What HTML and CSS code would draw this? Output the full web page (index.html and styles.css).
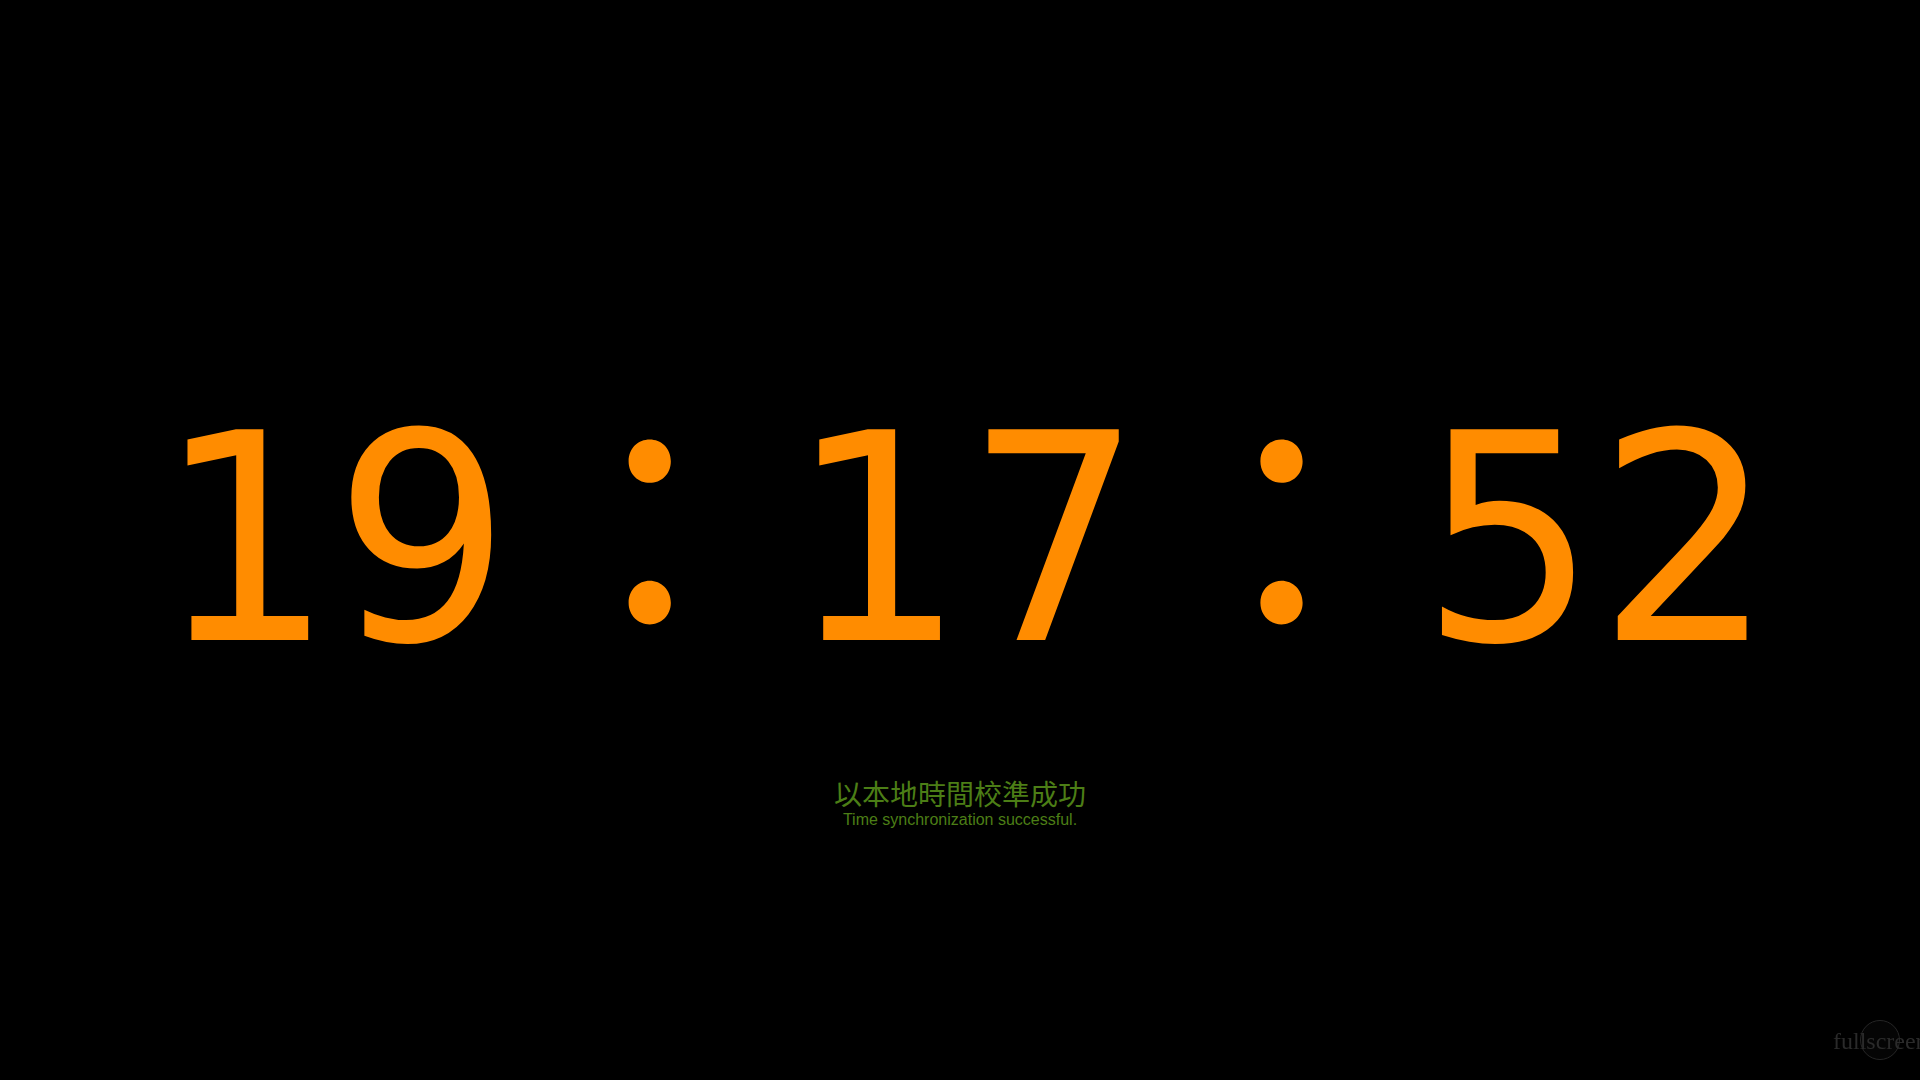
FILE: index.html
```html
<!DOCTYPE html>
<html lang="zh-Hant">
<head>
<meta charset="utf-8">
<title>時鐘</title>
<link rel="stylesheet" href="styles.css">
</head>
<body>
<main class="stage">
  <div class="clock">19：17：52</div>
  <div class="msg">
    <div class="msg-zh">以本地時間校準成功</div>
    <div class="msg-en">Time synchronization successful.</div>
  </div>
</main>
<div class="fs-btn">
  <span class="fs-ring"></span>
  <span class="fs-label">fullscreen</span>
</div>
</body>
</html>
```
FILE: styles.css
```css
html, body {
  margin: 0;
  padding: 0;
  background: #000;
  width: 100%;
  height: 100%;
  overflow: hidden;
}
.stage {
  padding-top: 396px;
  display: flex;
  flex-direction: column;
  align-items: center;
}
.clock {
  font-family: "DejaVu Sans", "Noto Sans CJK TC", sans-serif;
  font-size: 289px;
  line-height: 289px;
  height: 289px;
  margin-left: 12px;
  color: #ff8c00;
  white-space: nowrap;
  transform: scaleX(0.962);
}
.msg {
  margin-top: 90px;
  text-align: center;
  color: #4c7e16;
}
.msg-zh {
  font-family: "Noto Sans CJK TC", sans-serif;
  font-size: 28px;
  line-height: 36px;
}
.msg-en {
  font-family: "Liberation Sans", Arial, sans-serif;
  font-size: 16px;
  line-height: 18px;
}
.fs-btn {
  position: fixed;
  left: 1833px;
  top: 1020px;
  width: 87px;
  height: 40px;
  overflow: hidden;
}
.fs-ring {
  position: absolute;
  left: 27px;
  top: 0;
  width: 38px;
  height: 38px;
  border: 1px solid #262626;
  border-radius: 50%;
  background: #050505;
}
.fs-label {
  position: absolute;
  left: 0;
  top: 7px;
  font-family: "Liberation Serif", "Times New Roman", serif;
  font-size: 24px;
  line-height: 28px;
  color: #2a2a2a;
  white-space: nowrap;
}
```
